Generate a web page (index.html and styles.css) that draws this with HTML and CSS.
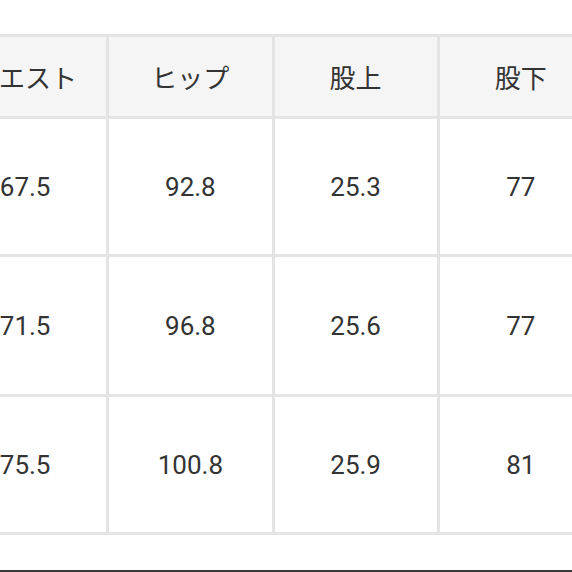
FILE: index.html
```html
<!DOCTYPE html>
<html lang="ja">
<head>
<meta charset="utf-8">
<link rel="stylesheet" href="styles.css">
</head>
<body>
<div class="page">
  <table class="size-table">
    <thead>
      <tr>
        <th>ウエスト</th>
        <th>ヒップ</th>
        <th>股上</th>
        <th>股下</th>
      </tr>
    </thead>
    <tbody>
      <tr class="r1">
        <td>67.5</td>
        <td>92.8</td>
        <td>25.3</td>
        <td>77</td>
      </tr>
      <tr class="r2">
        <td>71.5</td>
        <td>96.8</td>
        <td>25.6</td>
        <td>77</td>
      </tr>
      <tr class="r3">
        <td>75.5</td>
        <td>100.8</td>
        <td>25.9</td>
        <td>81</td>
      </tr>
    </tbody>
  </table>
  <div class="bottom-bar"></div>
</div>
</body>
</html>
```
FILE: styles.css
```css
html, body {
  margin: 0;
  padding: 0;
  background: #ffffff;
  overflow: hidden;
}
.page {
  width: 572px;
  height: 572px;
  overflow: hidden;
  position: relative;
}
.size-table {
  border-collapse: collapse;
  table-layout: fixed;
  width: 664px;
  margin-top: 34px;
  margin-left: -59px;
  font-family: "Noto Sans CJK JP", "Noto Sans", sans-serif;
  color: #333333;
}
.size-table th,
.size-table td {
  border: 3px solid #e4e4e4;
  text-align: center;
  vertical-align: middle;
  padding: 0;
}
.size-table th {
  height: 79px;
  background: #f5f5f5;
  font-weight: 400;
  font-size: 26px;
}
.size-table td {
  font-family: Roboto, "Noto Sans CJK JP", sans-serif;
  font-size: 26px;
  background: #ffffff;
}
.r1 td { height: 135px; }
.r2 td { height: 137px; }
.r3 td { height: 135px; }
.bottom-bar {
  position: absolute;
  left: 0;
  right: 0;
  top: 570px;
  height: 2px;
  background: #3a3a3a;
}
```
